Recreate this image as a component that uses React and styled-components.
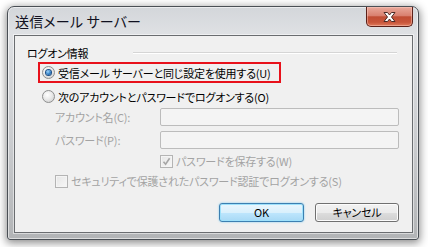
import React from 'react';
import styled, { createGlobalStyle } from 'styled-components';

const GlobalStyle = createGlobalStyle`
  html, body {
    margin: 0;
    padding: 0;
    background: #ffffff;
  }
  body {
    font-family: "Noto Sans CJK JP", "Noto Sans", sans-serif;
    font-feature-settings: "palt";
    font-size: 11px;
    letter-spacing: -0.2px;
    color: #000;
  }
`;

const Page = styled.div`
  width: 428px;
  height: 247px;
  padding: 6px 0 0 7px;
  box-sizing: border-box;
`;

const Window = styled.div`
  width: 412px;
  box-sizing: border-box;
  border: 1px solid #4a4f55;
  border-radius: 7px 7px 3px 3px;
  background: linear-gradient(to bottom, #d3d6da 0%, #dfe1e4 12%, #c9cbce 60%, #b2b4b6 100%);
  box-shadow: 0 2px 9px 1px rgba(0, 0, 0, 0.45), inset 0 0 0 1px rgba(255, 255, 255, 0.55);
  display: flex;
  flex-direction: column;
`;

const TitleBar = styled.div`
  height: 28px;
  display: flex;
  justify-content: space-between;
  align-items: flex-start;
  padding: 0 5px 0 7px;
`;

const Title = styled.span`
  font-size: 14px;
  line-height: 28px;
  color: #101020;
  letter-spacing: 0.2px;
`;

const CloseButton = styled.div`
  width: 47px;
  height: 20px;
  box-sizing: border-box;
  border: 1px solid #5b2018;
  border-top: none;
  border-radius: 0 0 5px 5px;
  background: linear-gradient(to bottom, #e9a99b 0%, #d98170 45%, #c04d34 52%, #c8553a 80%, #e07b5c 100%);
  box-shadow: inset 0 0 0 1px rgba(255, 210, 200, 0.45);
  display: flex;
  align-items: center;
  justify-content: center;
`;

const Client = styled.div`
  margin: 0 5px 6px 6px;
  border: 1px solid #6a6d70;
  box-shadow: 0 0 0 1px rgba(255, 255, 255, 0.5);
  background: #f0f0f0;
  display: flex;
  flex-direction: column;
  padding-bottom: 10px;
`;

const GroupHeader = styled.div`
  margin-top: 10px;
  height: 14px;
  display: flex;
  align-items: center;
  padding-left: 12px;
  margin-right: 15px;
`;

const GroupLabel = styled.span`
  width: 106px;
  flex: none;
  line-height: 14px;
`;

const GroupLine = styled.div`
  flex: 1;
  height: 0;
  border-top: 1px solid #d5d5d5;
  border-bottom: 1px solid #ffffff;
`;

const RadioRow = styled.label`
  margin-top: ${p => p.$first ? '2px' : '3px'};
  margin-left: 23px;
  width: 243px;
  height: 21px;
  box-sizing: border-box;
  border: 2px solid ${p => p.$highlight ? '#e8111b' : 'transparent'};
  padding-left: 2px;
  display: flex;
  align-items: center;
  gap: 3px;
  white-space: nowrap;
`;

const RadioCircle = styled.span`
  width: 13px;
  height: 13px;
  box-sizing: border-box;
  border-radius: 50%;
  border: 1px solid #8e8f8f;
  background: radial-gradient(circle at 40% 35%, #ffffff 0%, #eaeaea 45%, #c9c9c9 100%);
  display: flex;
  align-items: center;
  justify-content: center;
  flex: none;

  &::after {
    content: '';
    width: 5px;
    height: 5px;
    border-radius: 50%;
    display: ${p => p.$checked ? 'block' : 'none'};
    background: radial-gradient(circle at 40% 35%, #9fd6fb 0%, #2f7fc8 55%, #0d3f7a 100%);
    box-shadow: 0 0 0 1px #1d4f86;
  }
`;

const FieldRow = styled.div`
  margin-top: ${p => p.$gap}px;
  height: 18px;
  display: flex;
  align-items: center;
  padding-left: 40px;
`;

const FieldLabel = styled.span`
  width: 105px;
  flex: none;
  color: #a3a3a3;
  white-space: nowrap;
`;

const TextBox = styled.div`
  width: 239px;
  height: 18px;
  box-sizing: border-box;
  border: 1px solid #bcbcbc;
  border-radius: 2px;
  background: #f4f4f4;
`;

const CheckRow = styled.div`
  margin-top: ${p => p.$gap}px;
  margin-left: ${p => p.$indent}px;
  height: 13px;
  display: flex;
  align-items: center;
  gap: 3px;
  color: #a3a3a3;
  white-space: nowrap;
  line-height: 13px;
`;

const CheckBox = styled.span`
  width: 13px;
  height: 13px;
  box-sizing: border-box;
  border: 1px solid #b4b4b4;
  background: linear-gradient(135deg, #e6e6e6 0%, #f7f7f7 100%);
  box-shadow: inset 0 0 0 1px #f4f4f4;
  display: flex;
  align-items: center;
  justify-content: center;
  flex: none;
`;

const ButtonBar = styled.div`
  margin-top: 15px;
  display: flex;
  justify-content: flex-end;
  gap: 11px;
  margin-right: 13px;
`;

const Button = styled.div`
  width: ${p => p.$width}px;
  height: 19px;
  box-sizing: border-box;
  border-radius: 3px;
  border: 1px solid ${p => p.$default ? '#3c7fb1' : '#707070'};
  background: ${p => p.$default
    ? 'linear-gradient(to bottom, #eaf6fd 0%, #d9f0fc 50%, #bee6fd 51%, #a7d9f5 100%)'
    : 'linear-gradient(to bottom, #f2f2f2 0%, #ebebeb 50%, #dddddd 51%, #cfcfcf 100%)'};
  box-shadow: ${p => p.$default
    ? 'inset 0 0 0 1px #9ee1fb, 0 0 2px #6fc8f0'
    : 'inset 0 0 0 1px #fcfcfc'};
  display: flex;
  align-items: center;
  justify-content: center;
  line-height: 17px;
`;

const CloseGlyph = () => (
  <svg width="15" height="12" viewBox="0 0 15 12">
    <path
      d="M2 1.5 H5.5 L7.5 4 L9.5 1.5 H13 L9.5 6 L13 10.5 H9.5 L7.5 8 L5.5 10.5 H2 L5.5 6 Z"
      fill="#ffffff"
      stroke="#4a2a26"
      strokeWidth="1"
      strokeLinejoin="round"
    />
  </svg>
);

const CheckMark = () => (
  <svg width="9" height="9" viewBox="0 0 9 9">
    <path d="M1.5 4.8 L3.6 7.2 L7.6 1.2" fill="none" stroke="#a6a6a6" strokeWidth="1.6" />
  </svg>
);

const App = () => (
  <>
    <GlobalStyle />
    <Page>
      <Window>
        <TitleBar>
          <Title>送信メール サーバー</Title>
          <CloseButton>
            <CloseGlyph />
          </CloseButton>
        </TitleBar>
        <Client>
          <GroupHeader>
            <GroupLabel>ログオン情報</GroupLabel>
            <GroupLine />
          </GroupHeader>
          <RadioRow $first $highlight>
            <RadioCircle $checked />
            受信メール サーバーと同じ設定を使用する(U)
          </RadioRow>
          <RadioRow>
            <RadioCircle />
            次のアカウントとパスワードでログオンする(O)
          </RadioRow>
          <FieldRow $gap={1}>
            <FieldLabel>アカウント名(C):</FieldLabel>
            <TextBox />
          </FieldRow>
          <FieldRow $gap={5}>
            <FieldLabel>パスワード(P):</FieldLabel>
            <TextBox />
          </FieldRow>
          <CheckRow $gap={6} $indent={145}>
            <CheckBox>
              <CheckMark />
            </CheckBox>
            パスワードを保存する(W)
          </CheckRow>
          <CheckRow $gap={7} $indent={40}>
            <CheckBox />
            セキュリティで保護されたパスワード認証でログオンする(S)
          </CheckRow>
          <ButtonBar>
            <Button $default $width={85}>OK</Button>
            <Button $width={84}>キャンセル</Button>
          </ButtonBar>
        </Client>
      </Window>
    </Page>
  </>
);

export default App;
